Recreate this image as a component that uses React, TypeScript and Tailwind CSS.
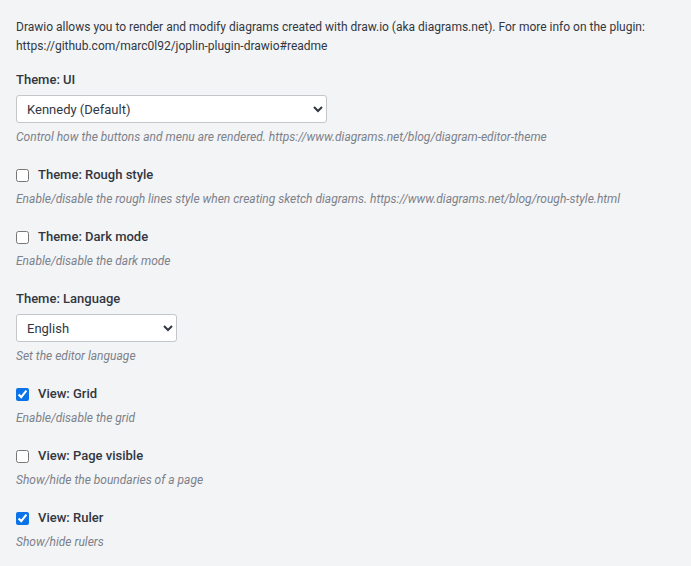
import { useState } from "react";

type Field =
  | { kind: "select"; label: string; value: string; options: string[]; width: string; help: string }
  | { kind: "check"; label: string; checked: boolean; help: string };

const fields: Field[] = [
  {
    kind: "select",
    label: "Theme: UI",
    value: "Kennedy (Default)",
    options: ["Kennedy (Default)", "Minimal", "Atlas", "Sketch", "Simple"],
    width: "w-[311px]",
    help: "Control how the buttons and menu are rendered. https://www.diagrams.net/blog/diagram-editor-theme",
  },
  {
    kind: "check",
    label: "Theme: Rough style",
    checked: false,
    help: "Enable/disable the rough lines style when creating sketch diagrams. https://www.diagrams.net/blog/rough-style.html",
  },
  { kind: "check", label: "Theme: Dark mode", checked: false, help: "Enable/disable the dark mode" },
  {
    kind: "select",
    label: "Theme: Language",
    value: "English",
    options: ["English", "Deutsch", "Español", "Français", "Italiano"],
    width: "w-[161px]",
    help: "Set the editor language",
  },
  { kind: "check", label: "View: Grid", checked: true, help: "Enable/disable the grid" },
  { kind: "check", label: "View: Page visible", checked: false, help: "Show/hide the boundaries of a page" },
  { kind: "check", label: "View: Ruler", checked: true, help: "Show/hide rulers" },
];

function Help({ children, tight }: { children: string; tight?: boolean }) {
  return (
    <div className={`${tight ? "mt-[6px]" : "mt-[7px]"} text-[12px] italic leading-[16px] text-[#7c818a]`}>
      {children}
    </div>
  );
}

function SelectField({ f }: { f: Extract<Field, { kind: "select" }> }) {
  const [value, setValue] = useState(f.value);
  return (
    <div>
      <div className="text-[13px] font-medium leading-[18px] text-[#32373f]">{f.label}</div>
      <select
        value={value}
        onChange={(e) => setValue(e.target.value)}
        className={`mt-[6px] h-[28px] ${f.width} rounded-[3px] border border-[#c4c6c9] bg-white pl-[6px] text-[13px] text-[#32373f]`}
      >
        {f.options.map((o) => (
          <option key={o}>{o}</option>
        ))}
      </select>
      <Help tight>{f.help}</Help>
    </div>
  );
}

function CheckField({ f }: { f: Extract<Field, { kind: "check" }> }) {
  const [checked, setChecked] = useState(f.checked);
  return (
    <div>
      <label className="flex items-center gap-[9px] text-[13px] font-medium leading-[18px] text-[#32373f]">
        <input
          type="checkbox"
          checked={checked}
          onChange={(e) => setChecked(e.target.checked)}
          className="m-0 h-[13px] w-[13px] accent-[#0b72e7]"
        />
        {f.label}
      </label>
      <Help>{f.help}</Help>
    </div>
  );
}

export default function App() {
  return (
    <div className="min-h-[566px] bg-[#f3f4f6] px-4 pt-[18px] font-['Roboto',sans-serif]">
      <p className="text-[12px] leading-[19px] text-[#32373f]">
        Drawio allows you to render and modify diagrams created with draw.io (aka diagrams.net). For more info on the
        plugin: https://github.com/marc0l92/joplin-plugin-drawio#readme
      </p>
      <div className="mt-[15px] flex flex-col gap-[21px]">
        {fields.map((f) =>
          f.kind === "select" ? <SelectField key={f.label} f={f} /> : <CheckField key={f.label} f={f} />
        )}
      </div>
    </div>
  );
}
